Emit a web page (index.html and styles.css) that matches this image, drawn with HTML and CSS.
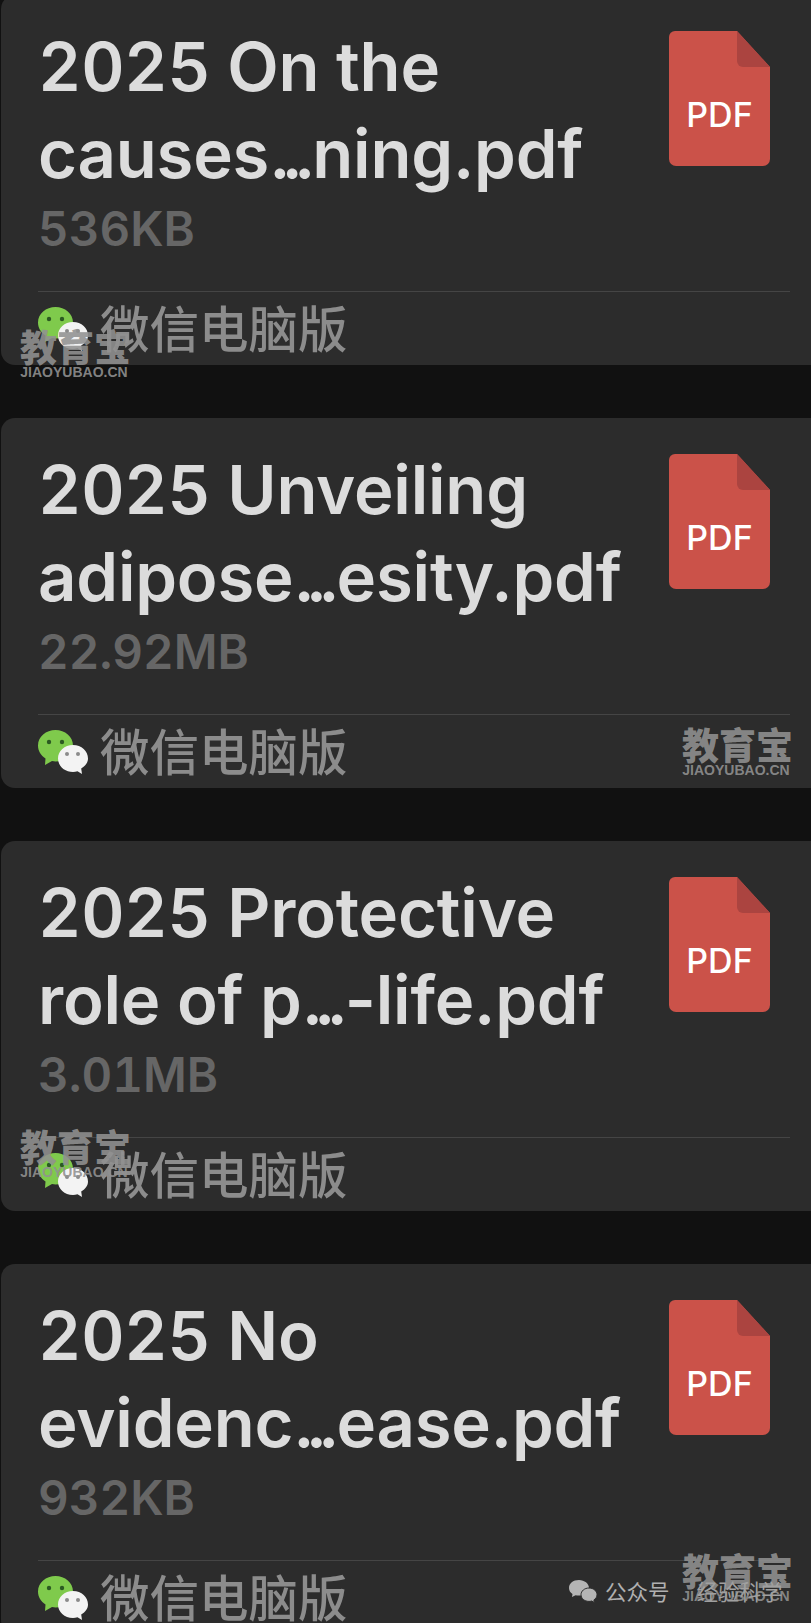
FILE: index.html
```html
<!DOCTYPE html>
<html>
<head>
<meta charset="utf-8" />
<title>文件列表</title>
<link rel="stylesheet" href="styles.css">
</head>
<body>
<svg class="defs" width="0" height="0">
  <symbol id="pdf" viewBox="0 0 101 135">
    <path d="M6 0H68L101 36V128a7 7 0 0 1-7 7H7a7 7 0 0 1-7-7V6a6 6 0 0 1 6-6z" fill="#cb5249"/>
    <path d="M68 0L101 36H74a6 6 0 0 1-6-6z" fill="#ab4440"/>
  </symbol>
  <symbol id="wx" viewBox="0 0 50 44">
    <path d="M17.500 0C8 0 0 6.500 0 15.500c0 5.500 3 10 7.500 13L7 35l7-4c1.200.3 2.400.5 3.500.5C27 31.500 35 24.500 35 15.500S27 0 17.500 0z" fill="#7fca4c"/>
    <circle cx="11" cy="12" r="2.200" fill="#2c5a22"/>
    <circle cx="24" cy="12" r="2.200" fill="#2c5a22"/>
    <path d="M35 15C26.500 15 20 21 20 28.500S26.500 42 35 42c1.500 0 3-.2 4.500-.7L44 44l-.8-5.500C47.500 36 50 32.500 50 28.500 50 21 43.500 15 35 15z" fill="#f3f3f3"/>
    <circle cx="29" cy="24" r="2" fill="#8b8b8b"/>
    <circle cx="40" cy="24" r="2" fill="#8b8b8b"/>
  </symbol>
</svg>

<div class="list">
  <div class="card">
    <div class="top">
      <div class="info">
        <div class="name"><span class="year">2025</span> On the<br>causes<span class="dots">...</span>ning.pdf</div>
        <div class="size">536KB</div>
      </div>
      <div class="icon"><svg><use href="#pdf"></use></svg><span>PDF</span></div>
    </div>
    <div class="foot"><svg class="wx"><use href="#wx"></use></svg><span class="src">微信电脑版</span></div>
  </div>
  <div class="card">
    <div class="top">
      <div class="info">
        <div class="name"><span class="year">2025</span> Unveiling<br>adipose<span class="dots">...</span>esity.pdf</div>
        <div class="size">22.92MB</div>
      </div>
      <div class="icon"><svg><use href="#pdf"></use></svg><span>PDF</span></div>
    </div>
    <div class="foot"><svg class="wx"><use href="#wx"></use></svg><span class="src">微信电脑版</span></div>
  </div>
  <div class="card">
    <div class="top">
      <div class="info">
        <div class="name"><span class="year">2025</span> Protective<br>role of p<span class="dots">...</span>-life.pdf</div>
        <div class="size">3.01MB</div>
      </div>
      <div class="icon"><svg><use href="#pdf"></use></svg><span>PDF</span></div>
    </div>
    <div class="foot"><svg class="wx"><use href="#wx"></use></svg><span class="src">微信电脑版</span></div>
  </div>
  <div class="card">
    <div class="top">
      <div class="info">
        <div class="name"><span class="year">2025</span> No<br>evidenc<span class="dots">...</span>ease.pdf</div>
        <div class="size">932KB</div>
      </div>
      <div class="icon"><svg><use href="#pdf"></use></svg><span>PDF</span></div>
    </div>
    <div class="foot"><svg class="wx"><use href="#wx"></use></svg><span class="src">微信电脑版</span></div>
  </div>
</div>

<!-- 水印 -->
<div class="mark m1">教育宝<small>JIAOYUBAO.CN</small></div>
<div class="mark m2">教育宝<small>JIAOYUBAO.CN</small></div>
<div class="mark m3">教育宝<small>JIAOYUBAO.CN</small></div>
<div class="mark m4">教育宝<small>JIAOYUBAO.CN</small></div>
<div class="gzh">
  <svg viewBox="0 0 30 24"><path d="M11 1C5 1 1 4.500 1 9c0 2.500 1.300 4.500 3.500 6L4 18l3.500-1.800c1.200.3 2.300.4 3.500.4 5.500 0 10-3.500 10-7.700S16.500 1 11 1z" fill="#b5b5b5"/><path d="M21 9c-4.500 0-8 3-8 6.700s3.500 6.700 8 6.700c.9 0 1.800-.1 2.600-.4l2.900 1.500-.6-2.600c2-1.200 3.100-3.100 3.100-5.200C29 12 25.500 9 21 9z" fill="#b5b5b5" stroke="#2c2c2c" stroke-width="1"/></svg>
  <span>公众号</span><span class="gzh-name">经验科学</span>
</div>
</body>
</html>
```

FILE: styles.css
```css
*{
	margin:0;
	padding:0;
	box-sizing:border-box;}
html,body{
	height:1623px;
	overflow:hidden;}
body{
	background:#111;
	font-family:Inter,"Liberation Sans","Noto Sans CJK SC",sans-serif;
	position:relative;}
.defs{
	position:absolute;}
.list{
	display:flex;
	flex-direction:column;
	gap:53px;
	margin-top:-5px;
	margin-left:1px;}
.card{
	height:370px;
	flex:none;
	background:#2c2c2c;
	border-radius:14px 0 0 14px;
	padding:0 21px 0 37px;}
.top{
	display:flex;
	justify-content:space-between;
	height:296px;
	padding-right:20px;}
.info{
	padding-top:28px;}
.name{
	font-size:67px;
	line-height:87px;
	font-weight:600;
	letter-spacing:-.2px;
	color:#dcdcdc;
	white-space:nowrap;}
.year{
	font-variant-numeric:tabular-nums;}
.dots{
	letter-spacing:-9px;
	margin-right:6px;}
.size{
	font-size:47.500px;
	line-height:62px;
	font-weight:600;
	font-variant-numeric:tabular-nums;
	color:#666;
	margin-top:1px;}
.icon{
	width:101px;
	height:135px;
	margin-top:36px;
	flex:none;
	display:grid;
	place-items:center;}
.icon svg,.icon span{
	grid-area:1/1;}
.icon svg{
	width:101px;
	height:135px;}
.icon span{
	color:#fff;
	font-size:34px;
	font-weight:500;
	margin-top:31px;
	z-index:1;}
.foot{
	border-top:1px solid #454545;
	height:74px;
	display:flex;
	align-items:center;
	gap:12px;
	font-family:"Noto Sans CJK SC",sans-serif;
	font-size:49.500px;
	font-weight:500;
	color:#8c8c8c;}
.wx{
	width:50px;
	height:44px;
	flex:none;}
.src{
	margin-top:-4px;}
.mark{
	position:absolute;
	width:108px;
	font-family:"Noto Sans CJK SC",sans-serif;
	font-size:37px;
	line-height:38px;
	font-weight:900;
	color:rgba(145,145,145,.9);
	text-align:center;
	white-space:nowrap;}
.mark small{
	display:block;
	font-family:"Liberation Sans",sans-serif;
	font-size:14px;
	line-height:14px;
	font-weight:700;}
.m1{left:20px;top:327px;}
.m2{left:682px;top:725px;}
.m3{left:20px;top:1127px;}
.m4{left:682px;top:1551px;}
.gzh{
	position:absolute;
	left:568px;
	top:1579px;
	display:flex;
	align-items:center;
	font-family:"Noto Sans CJK SC",sans-serif;
	font-size:21.500px;
	line-height:24px;
	color:#b0b0b0;}
.gzh svg{
	width:30px;
	height:24px;
	margin-right:7px;}
.gzh-name{
	margin-left:27px;
	color:#a0a0a0;}
```
